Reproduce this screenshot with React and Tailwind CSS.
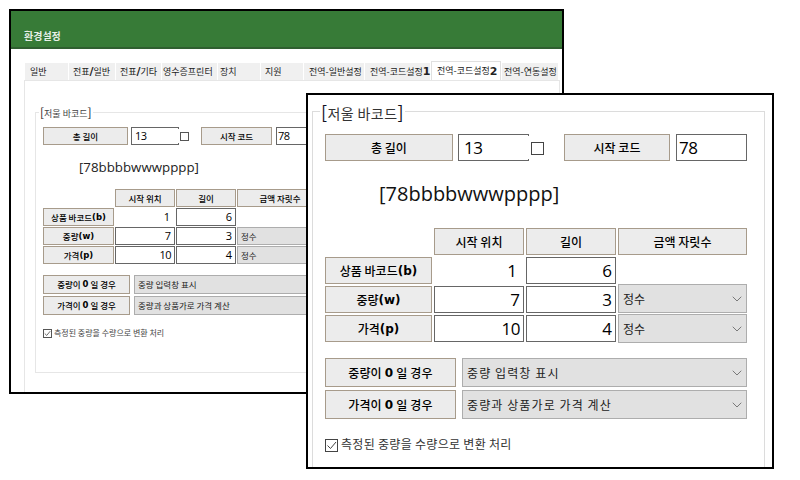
import { ChevronDown } from "lucide-react"

const KR = "font-['Noto_Sans_CJK_KR','Noto_Sans',sans-serif]"
const LATIN = "font-['Open_Sans','Noto_Sans_CJK_KR',sans-serif]"

const Em = ({ children }) => <b className="font-['DejaVu_Sans',sans-serif] font-bold text-[11px] leading-none">{children}</b>

const backTabs = [
  { name: <>일반</>, width: "w-[43px] pl-[5px]" },
  { name: <>전표<Em>/</Em>일반</>, width: "w-[46px] pl-[4px]" },
  { name: <>전표<Em>/</Em>기타</>, width: "w-[45px] pl-[4px]" },
  { name: <>영수증프린터</>, width: "w-[55px] pl-[1px]" },
  { name: <>장치</>, width: "w-[42px] pl-[2px]" },
  { name: <>지원</>, width: "w-[42px] pl-[4px]" },
  { name: <>전역-일반설정</>, width: "w-[60px] pl-[5px]" },
  { name: <>전역-코드설정<Em>1</Em></>, width: "w-[65px] pl-[5px]" },
  { name: <>전역-코드설정<Em>2</Em></>, width: "w-[70px] pl-[5px]", active: true },
  { name: <>전역-연동설정</>, width: "w-[56px] pl-[2px]" },
]

const Label = ({ children, className = "" }) => (
  <div className={`flex items-center justify-center bg-[#ececec] border border-[#a79b8b] text-black whitespace-pre ${className}`}>
    {children}
  </div>
)

const Field = ({ children, className = "" }) => (
  <div className={`flex items-center bg-white border border-[#666] text-black ${LATIN} ${className}`}>{children}</div>
)

// spin-box style input: right edge is open, only small ticks at the corners
const OpenField = ({ children, className = "" }) => (
  <div className={`relative flex items-center bg-white border border-r-0 border-[#666] text-black ${LATIN} ${className}`}>
    {children}
    <span className="absolute right-0 -top-[1px] w-[1px] h-[2px] bg-[#666]" />
    <span className="absolute right-0 -bottom-[1px] w-[1px] h-[2px] bg-[#666]" />
  </div>
)

const Select = ({ children, className = "", size = 16 }) => (
  <div className={`flex items-center justify-between bg-[#e1e1e1] border border-[#adadad] text-[#222] whitespace-pre ${className}`}>
    <span>{children}</span>
    <ChevronDown size={size} strokeWidth={1} className="text-[#444]" />
  </div>
)

const Bold = ({ children }) => <b className="font-['DejaVu_Sans',sans-serif] font-bold">{children}</b>

const BackWindow = () => (
  <div className={`absolute left-[9px] top-[9px] w-[555px] h-[385px] border-2 border-black bg-white overflow-hidden ${KR}`}>
    <div className="h-[38px] bg-[#377b37] border-b-2 border-[#2f5f30] flex items-end pl-[13px] pb-[4px]">
      <span className="text-[10px] leading-[14px] font-bold text-[#e8f0e8]">환경설정</span>
    </div>
    <div className="flex items-end h-[17px] mt-[14px] ml-[14px] text-[9px] text-[#222]">
      {backTabs.map((tab, i) => (
        <div
          key={i}
          className={`${tab.width} flex items-center whitespace-nowrap mr-[1px] ${
            tab.active ? "h-[19px] bg-white border border-b-0 border-[#e0e0e0]" : "h-[17px] bg-[#f0f0f0]"
          }`}
        >
          {tab.name}
        </div>
      ))}
    </div>
    <div className="ml-[13px] w-[536px] h-[320px] border border-[#e6e6e6] pl-[10px] pt-[31px]">
      <div className="relative w-[510px] h-[261px] border border-[#e6e6e6] pl-[7px] pt-[14px]">
        <span className="absolute left-[3px] -top-[8px] bg-white px-[1px] text-[9px] leading-[14px] text-[#444]">
          <span className="text-[12px] text-[#222]">[</span>저울 바코드<span className="text-[12px] text-[#222]">]</span>
        </span>
        <div className="flex h-[18px] text-[8.5px] font-medium">
          <Label className="w-[85px]">총 길이</Label>
          <OpenField className="w-[48px] ml-[3px] pl-[3px] text-[11px] tracking-[-0.5px] font-normal">13</OpenField>
          <div className="w-[9px] h-[9px] border border-[#555] ml-[1px] mt-[5px]" />
          <Label className="w-[71px] ml-[12px]">시작 코드</Label>
          <Field className="w-[48px] ml-[4px] pl-[1px] text-[11px] tracking-[-0.5px] font-normal">78</Field>
        </div>
        <div className={`mt-[12px] ml-[36px] h-[20px] leading-[20px] text-[13.3px] text-[#222] ${LATIN}`}>[78bbbbwwwpppp]</div>
        <div className="mt-[12px] grid grid-cols-[71px_60px_60px_86px] gap-x-[1px] gap-y-[1px] auto-rows-[18px] text-[8.5px] font-medium">
          <div />
          <Label>시작 위치</Label>
          <Label>길이</Label>
          <Label>금액 자릿수</Label>
          <Label>상품 바코드<Bold>(b)</Bold></Label>
          <div className={`flex items-center justify-end pr-[5px] text-[11px] font-normal text-black ${LATIN}`}>1</div>
          <Field className="justify-end pr-[3px] text-[11px] font-normal">6</Field>
          <div />
          <Label>중량<Bold>(w)</Bold></Label>
          <Field className="justify-end pr-[3px] text-[11px] font-normal">7</Field>
          <Field className="justify-end pr-[3px] text-[11px] font-normal">3</Field>
          <Select className="pl-[3px] pr-[1px] font-normal" size={11}>정수</Select>
          <Label>가격<Bold>(p)</Bold></Label>
          <Field className="justify-end pr-[3px] text-[11px] tracking-[-0.5px] font-normal">10</Field>
          <Field className="justify-end pr-[3px] text-[11px] font-normal">4</Field>
          <Select className="pl-[3px] pr-[1px] font-normal" size={11}>정수</Select>
        </div>
        <div className="mt-[11px] grid grid-cols-[87px_189px] gap-x-[4px] gap-y-[2px] auto-rows-[19px] text-[8.5px]">
          <Label className="font-medium">중량이 <Bold>0</Bold> 일 경우</Label>
          <Select className="pl-[3px] pr-[1px]" size={11}>중량 입력창 표시</Select>
          <Label className="font-medium">가격이 <Bold>0</Bold> 일 경우</Label>
          <Select className="pl-[3px] pr-[1px]" size={11}>중량과 상품가로 가격 계산</Select>
        </div>
        <div className="mt-[14px] flex items-center gap-[2px] h-[9px] text-[8px] text-[#444]">
          <div className="w-[9px] h-[9px] border border-[#555] flex items-center justify-center">
            <svg viewBox="0 0 9 9" className="w-[7px] h-[7px]"><path d="M1 4.5 3.5 7 8 1.5" fill="none" stroke="#444" strokeWidth="1" /></svg>
          </div>
          <span className="pb-[1px]">측정된 중량을 수량으로 변환 처리</span>
        </div>
      </div>
    </div>
  </div>
)

const FrontWindow = () => (
  <div className={`absolute left-[306px] top-[93px] w-[468px] h-[376px] border-2 border-black bg-white overflow-hidden ${KR}`}>
    <div className="relative ml-[4px] mt-[16px] w-[453px] h-[400px] border border-[#dcdcdc] pl-[12px] pt-[22px]">
      <span className="absolute left-[7px] -top-[10px] h-[18px] bg-white px-[1px] text-[14px] leading-[18px] tracking-[0.4px] text-[#333]">
        <span className="text-[18px] text-[#112]">[</span>저울 바코드<span className="text-[18px] text-[#112]">]</span>
      </span>
      <div className="flex h-[27px] text-[12px] font-medium">
        <Label className="w-[128px]">총 길이</Label>
        <OpenField className="w-[71px] ml-[5px] pl-[5px] text-[17px] tracking-[-0.5px] font-normal">13</OpenField>
        <div className="w-[13px] h-[13px] border border-[#444] ml-[2px] mt-[8px]" />
        <Label className="w-[106px] ml-[20px]">시작 코드</Label>
        <Field className="w-[71px] ml-[6px] pl-[2px] text-[17px] tracking-[-0.5px] font-normal">78</Field>
      </div>
      <div className={`mt-[18px] ml-[54px] h-[30px] leading-[30px] text-[20px] text-[#111] ${LATIN}`}>[78bbbbwwwpppp]</div>
      <div className="mt-[19px] grid grid-cols-[107px_90px_90px_129px] gap-x-[2px] gap-y-[2px] auto-rows-[27px] text-[12px] font-medium">
        <div />
        <Label>시작 위치</Label>
        <Label>길이</Label>
        <Label>금액 자릿수</Label>
        <Label>상품 바코드<Bold>(b)</Bold></Label>
        <div className={`flex items-center justify-end pr-[7px] text-[17px] font-normal text-black ${LATIN}`}>1</div>
        <Field className="justify-end pr-[3px] text-[17px] font-normal">6</Field>
        <div />
        <Label>중량<Bold>(w)</Bold></Label>
        <Field className="justify-end pr-[3px] text-[17px] font-normal">7</Field>
        <Field className="justify-end pr-[3px] text-[17px] font-normal">3</Field>
        <Select className="pl-[4px] pr-[1px] font-normal -mt-[2px] h-[29px]">정수</Select>
        <Label>가격<Bold>(p)</Bold></Label>
        <Field className="justify-end pr-[3px] text-[17px] tracking-[-0.5px] font-normal">10</Field>
        <Field className="justify-end pr-[3px] text-[17px] font-normal">4</Field>
        <Select className="pl-[4px] pr-[1px] font-normal -mt-[1px] h-[29px]">정수</Select>
      </div>
      <div className="mt-[16px] grid grid-cols-[131px_285px] gap-x-[6px] gap-y-[3px] auto-rows-[29px] text-[12px]">
        <Label className="font-medium tracking-[0.2px]">중량이 <Bold>0</Bold> 일 경우</Label>
        <Select className="pl-[4px] pr-[1px] tracking-[1.1px]">중량 입력창 표시</Select>
        <Label className="font-medium tracking-[0.2px]">가격이 <Bold>0</Bold> 일 경우</Label>
        <Select className="pl-[4px] pr-[1px] tracking-[1.1px]">중량과 상품가로 가격 계산</Select>
      </div>
      <div className="mt-[20px] flex items-center gap-[3px] h-[13px] text-[12px] tracking-[0.3px] text-[#333]">
        <div className="w-[13px] h-[13px] border border-[#444] flex items-center justify-center">
          <svg viewBox="0 0 11 11" className="w-[11px] h-[11px]"><path d="M1.5 5.5 4.5 8.5 10 2" fill="none" stroke="#444" strokeWidth="1" /></svg>
        </div>
        <span className="pb-[3px]">측정된 중량을 수량으로 변환 처리</span>
      </div>
    </div>
  </div>
)

export default function App() {
  return (
    <div className="relative w-[800px] h-[480px] bg-white overflow-hidden">
      <BackWindow />
      <FrontWindow />
    </div>
  )
}
